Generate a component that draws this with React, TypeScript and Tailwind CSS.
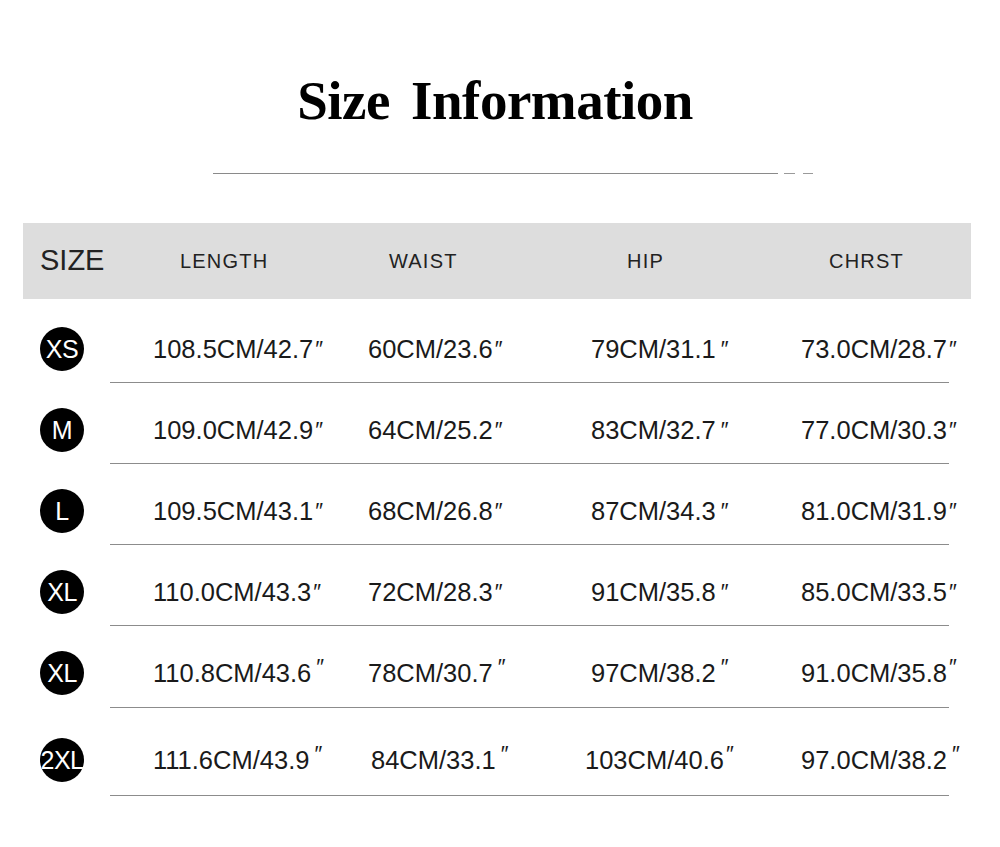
import React from "react";

type Cell = { t: string; gap?: boolean; up?: boolean; dx?: number };
type Row = { size: string; cells: Cell[]; mt: string; mb: string };

const rows: Row[] = [
  {
    size: "XS",
    mt: "mt-[28px]",
    mb: "mt-[11px]",
    cells: [{ t: "108.5CM/42.7" }, { t: "60CM/23.6" }, { t: "79CM/31.1", gap: true }, { t: "73.0CM/28.7" }],
  },
  {
    size: "M",
    mt: "mt-[25px]",
    mb: "mt-[11px]",
    cells: [{ t: "109.0CM/42.9" }, { t: "64CM/25.2" }, { t: "83CM/32.7", gap: true }, { t: "77.0CM/30.3" }],
  },
  {
    size: "L",
    mt: "mt-[25px]",
    mb: "mt-[11px]",
    cells: [{ t: "109.5CM/43.1" }, { t: "68CM/26.8" }, { t: "87CM/34.3", gap: true }, { t: "81.0CM/31.9" }],
  },
  {
    size: "XL",
    mt: "mt-[25px]",
    mb: "mt-[11px]",
    cells: [{ t: "110.0CM/43.3" }, { t: "72CM/28.3" }, { t: "91CM/35.8", gap: true }, { t: "85.0CM/33.5" }],
  },
  {
    size: "XL",
    mt: "mt-[25px]",
    mb: "mt-[12px]",
    cells: [
      { t: "110.8CM/43.6", up: true, gap: true },
      { t: "78CM/30.7", up: true, gap: true },
      { t: "97CM/38.2", up: true, gap: true },
      { t: "91.0CM/35.8", up: true },
    ],
  },
  {
    size: "2XL",
    mt: "mt-[30px]",
    mb: "mt-[13px]",
    cells: [
      { t: "111.6CM/43.9", up: true, gap: true },
      { t: "84CM/33.1", up: true, gap: true, dx: 3 },
      { t: "103CM/40.6", up: true, dx: -6 },
      { t: "97.0CM/38.2", up: true, gap: true },
    ],
  },
];

const widths = ["w-[215px]", "w-[223px]", "w-[210px]", "w-[160px]"];

function Value({ c }: { c: Cell }) {
  return (
    <span className="whitespace-nowrap relative" style={c.dx ? { left: c.dx } : undefined}>
      {c.t}
      <span className={`${c.gap ? "ml-[5px]" : "ml-[2px]"} inline-block text-[22px] ${c.up ? "-translate-y-[8px]" : "-translate-y-[2px]"}`}>″</span>
    </span>
  );
}

export default function App() {
  return (
    <div className="w-[1000px] h-[847px] bg-white overflow-hidden text-[#1a1a1a]" style={{ fontFamily: '"Liberation Sans", Arial, sans-serif' }}>
      <div className="pt-[66px] flex justify-center">
        <h1
          className="text-[55px] leading-[70px] font-bold text-black tracking-[-0.5px] [word-spacing:8px] -translate-x-[5px]"
          style={{ fontFamily: '"Liberation Serif", "Times New Roman", serif' }}
        >
          Size Information
        </h1>
      </div>
      <div className="mt-[37px] flex items-center">
        <div className="ml-[213px] w-[565px] h-px bg-[#8a8a8a]" />
        <div className="ml-[6px] w-[11px] h-px bg-[#9a9a9a]" />
        <div className="ml-[8px] w-[10px] h-px bg-[#9a9a9a]" />
      </div>
      <div className="mt-[49px] ml-[23px] w-[948px] h-[76px] bg-[#dddddd] flex items-center pl-[17px] text-[#222]">
        <div className="w-[140px] text-[29px]">SIZE</div>
        <div className="w-[209px] text-[20px] tracking-[1.2px]">LENGTH</div>
        <div className="w-[238px] text-[20px] tracking-[1.2px]">WAIST</div>
        <div className="w-[202px] text-[20px] tracking-[1.2px]">HIP</div>
        <div className="text-[20px] tracking-[1.2px]">CHRST</div>
      </div>
      {rows.map((r, i) => (
        <div key={i}>
          <div className={`${r.mt} h-[44px] flex items-center pl-[40px] text-[25.5px] text-[#1a1a1a]`}>
            <div className="w-[44px] h-[44px] rounded-full bg-black flex items-center justify-center shrink-0">
              <span className="text-white text-[25px] leading-none whitespace-nowrap tracking-[-0.5px]">{r.size}</span>
            </div>
            <div className="ml-[69px] flex">
              {r.cells.map((c, j) => (
                <div key={j} className={widths[j]}>
                  <Value c={c} />
                </div>
              ))}
            </div>
          </div>
          <div className={`${r.mb} ml-[110px] w-[839px] h-px bg-[#8c8c8c]`} />
        </div>
      ))}
    </div>
  );
}
